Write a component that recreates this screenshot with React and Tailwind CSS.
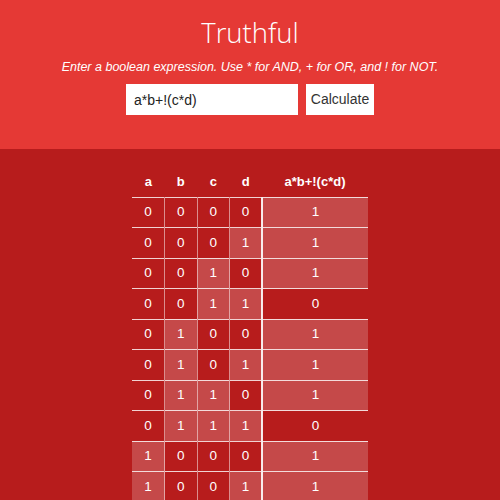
import React, { useState } from 'react';

const VARS = ['a', 'b', 'c', 'd'];

// a*b + !(c*d)
const evaluate = ({ a, b, c, d }) => ((a && b) || !(c && d) ? 1 : 0);

const buildRows = () => {
  const rows = [];
  for (let i = 0; i < 16; i++) {
    const vals = {
      a: (i >> 3) & 1,
      b: (i >> 2) & 1,
      c: (i >> 1) & 1,
      d: i & 1
    };
    rows.push({ vals, out: evaluate(vals) });
  }
  return rows;
};

const App = () => {
  const [expr, setExpr] = useState('a*b+!(c*d)');
  const rows = buildRows();

  return (
    <div className="min-h-screen bg-[#b71c1c] font-['Liberation_Sans',Arial,sans-serif]">
      {/* Header */}
      <div className="h-[149px] bg-[#e53935] flex flex-col items-center pt-[15px]">
        <h1 className="font-['Open_Sans',sans-serif] font-light text-[27.5px] leading-[36px] text-white">
          Truthful
        </h1>
        <p className="mt-[9px] text-[12.5px] leading-[14px] italic text-white">
          Enter a boolean expression. Use * for AND, + for OR, and ! for NOT.
        </p>
        <div className="mt-[10px] flex gap-[8px]">
          <input
            value={expr}
            onChange={e => setExpr(e.target.value)}
            className="w-[172px] h-[31px] bg-white px-[8px] text-[14px] text-[#222] outline-none"
          />
          <button className="w-[68px] h-[31px] bg-white text-[14px] text-[#333]">
            Calculate
          </button>
        </div>
      </div>

      {/* Truth table */}
      <div className="flex justify-center pt-[18px]">
        <table className="border-collapse table-fixed w-[236px] text-white">
          <colgroup>
            {VARS.map(v => <col key={v} className="w-[32.5px]" />)}
            <col className="w-[106px]" />
          </colgroup>
          <thead>
            <tr className="h-[30px]">
              {VARS.map(v => (
                <th key={v} className="text-[13px] font-bold">{v}</th>
              ))}
              <th className="text-[13px] font-bold">a*b+!(c*d)</th>
            </tr>
          </thead>
          <tbody>
            {rows.map((row, i) => (
              <tr key={i} className="h-[30.5px] border-t border-white/80">
                {VARS.map((v, j) => (
                  <td
                    key={v}
                    className={
                      'text-center text-[13.5px] ' +
                      (j > 0 ? 'border-l border-white/50 ' : '') +
                      (row.vals[v] ? 'bg-white/20' : '')
                    }
                  >
                    {row.vals[v]}
                  </td>
                ))}
                <td
                  className={
                    'text-center text-[13.5px] border-l-2 border-white/90 ' +
                    (row.out ? 'bg-white/20' : '')
                  }
                >
                  {row.out}
                </td>
              </tr>
            ))}
          </tbody>
        </table>
      </div>
    </div>
  );
};

export default App;
